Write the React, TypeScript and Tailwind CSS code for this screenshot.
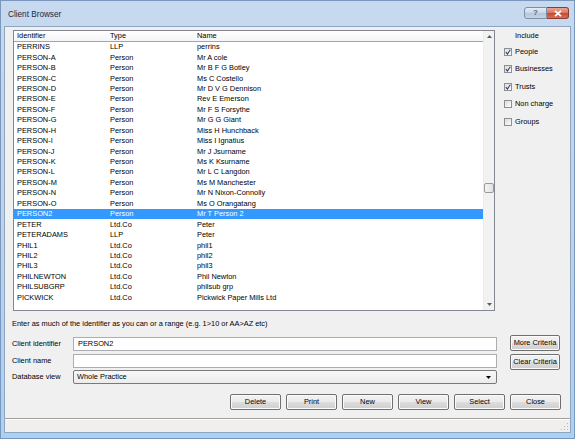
import React from 'react';

const rows: [string, string, string][] = [
  ['PERRINS', 'LLP', 'perrins'],
  ['PERSON-A', 'Person', 'Mr A cole'],
  ['PERSON-B', 'Person', 'Mr B F G Botley'],
  ['PERSON-C', 'Person', 'Ms C Costello'],
  ['PERSON-D', 'Person', 'Mr D V G Dennison'],
  ['PERSON-E', 'Person', 'Rev E Emerson'],
  ['PERSON-F', 'Person', 'Mr F S Forsythe'],
  ['PERSON-G', 'Person', 'Mr G G Giant'],
  ['PERSON-H', 'Person', 'Miss H Hunchback'],
  ['PERSON-I', 'Person', 'Miss I Ignatius'],
  ['PERSON-J', 'Person', 'Mr J Jsurname'],
  ['PERSON-K', 'Person', 'Ms K Ksurname'],
  ['PERSON-L', 'Person', 'Mr L C Langdon'],
  ['PERSON-M', 'Person', 'Ms M Manchester'],
  ['PERSON-N', 'Person', 'Mr N Nixon-Connolly'],
  ['PERSON-O', 'Person', 'Ms O Orangatang'],
  ['PERSON2', 'Person', 'Mr T Person 2'],
  ['PETER', 'Ltd.Co', 'Peter'],
  ['PETERADAMS', 'LLP', 'Peter'],
  ['PHIL1', 'Ltd.Co', 'phil1'],
  ['PHIL2', 'Ltd.Co', 'phil2'],
  ['PHIL3', 'Ltd.Co', 'phil3'],
  ['PHILNEWTON', 'Ltd.Co', 'Phil Newton'],
  ['PHILSUBGRP', 'Ltd.Co', 'philsub grp'],
  ['PICKWICK', 'Ltd.Co', 'Pickwick Paper Mills Ltd'],
];

const includes: [string, boolean][] = [
  ['People', true],
  ['Businesses', true],
  ['Trusts', true],
  ['Non charge', false],
  ['Groups', false],
];

function Button({ label, className = '' }: { label: string; className?: string }) {
  return (
    <div
      className={`flex h-[16px] items-center justify-center rounded-[2px] border border-[#707070] bg-[linear-gradient(#f2f2f2,#ebebeb_50%,#dddddd_50%,#cfcfcf)] shadow-[inset_0_0_0_1px_#fbfbfb] ${className}`}
    >
      {label}
    </div>
  );
}

function Checkbox({ checked }: { checked: boolean }) {
  return (
    <div className="flex h-[8px] w-[8px] items-center justify-center border border-[#8e8f8f] bg-[linear-gradient(135deg,#dcdcdc,#fbfbfb)]">
      {checked && (
        <svg width="6" height="6" viewBox="0 0 6 6">
          <path d="M0.8 3.2 L2.4 5 L5.3 0.8" fill="none" stroke="#2c3f74" strokeWidth="1.1" />
        </svg>
      )}
    </div>
  );
}

export default function App() {
  return (
    <div
      className="flex h-[439px] w-[575px] flex-col border border-[#7b97bd] bg-[linear-gradient(#c6d9ef,#bad2ec_60%,#a8d2f4)] text-[7.4px] leading-[10px] text-black"
      style={{ fontFamily: '"Liberation Sans", Arial, sans-serif' }}
    >
      {/* Title bar */}
      <div className="flex h-[25px] items-start">
        <div className="ml-[7px] mt-[8px] text-[8.2px] leading-[11px] text-[#1a2a3f]">Client Browser</div>
        <div className="ml-auto mr-[5px] mt-[6px] flex">
          <div className="flex h-[12px] w-[23px] items-center justify-center rounded-l-[3px] border border-[#7d8ea6] bg-[linear-gradient(#e4ecf6,#c9d6e6_50%,#b5c6db_50%,#c4d3e5)] text-[8px] font-bold leading-none text-[#57677c]">
            ?
          </div>
          <div className="flex h-[12px] w-[22px] items-center justify-center rounded-r-[3px] border border-l-0 border-[#8c3b33] bg-[linear-gradient(#eaa594,#d9735e_50%,#c74533_50%,#d86f57)]">
            <svg width="8" height="7" viewBox="0 0 8 7">
              <path d="M1 0.8 L7 6.2 M7 0.8 L1 6.2" stroke="#ffffff" strokeWidth="1.8" />
            </svg>
          </div>
        </div>
      </div>

      {/* Client area */}
      <div className="mx-[3px] flex h-[407px] flex-col border border-[#8fa6c3] bg-[#f0f0f0]">
        <div className="mt-[3px] flex">
          {/* List box */}
          <div className="ml-[8px] flex h-[281px] w-[482px] border border-[#828790] bg-white">
            <div className="flex w-[469px] flex-col">
              <div className="grid h-[11px] grid-cols-[93px_87px_1fr] items-center border-b border-[#a5a5a5] bg-[linear-gradient(#ffffff,#f4f5f7)]">
                <div className="pl-[3px]">Identifier</div>
                <div className="pl-[3px]">Type</div>
                <div className="pl-[3px]">Name</div>
              </div>
              {rows.map(([id, type, name]) => {
                const selected = id === 'PERSON2';
                return (
                  <div
                    key={id}
                    className={`grid h-[10.45px] grid-cols-[93px_87px_1fr] items-center ${
                      selected ? 'bg-[#3399ff] text-white' : ''
                    }`}
                  >
                    <div className="pl-[3px]">{id}</div>
                    <div className="pl-[3px]">{type}</div>
                    <div className="pl-[3px]">{name}</div>
                  </div>
                );
              })}
            </div>
            {/* Scrollbar */}
            <div className="flex w-[11px] flex-col bg-[#f2f2f2] border-l border-[#ececec]">
              <div className="flex h-[11px] items-center justify-center">
                <svg width="5" height="3" viewBox="0 0 5 3">
                  <path d="M0 3 L2.5 0 L5 3 Z" fill="#5c5c5c" />
                </svg>
              </div>
              <div className="mt-[141px] h-[10px] rounded-[2px] border border-[#9a9a9a] bg-[linear-gradient(90deg,#f4f4f4,#e2e2e2)]" />
              <div className="mt-auto flex h-[11px] items-center justify-center">
                <svg width="5" height="3" viewBox="0 0 5 3">
                  <path d="M0 0 L2.5 3 L5 0 Z" fill="#5c5c5c" />
                </svg>
              </div>
            </div>
          </div>

          {/* Include panel */}
          <div className="ml-[9px] flex flex-col">
            <div className="ml-[11px] mt-[1px] h-[10px]">Include</div>
            <div className="mt-[2px] flex flex-col">
              {includes.map(([label, checked]) => (
                <div key={label} className="flex h-[17.5px] items-center gap-[3px]">
                  <Checkbox checked={checked} />
                  <span>{label}</span>
                </div>
              ))}
            </div>
          </div>
        </div>

        <div className="ml-[7px] mt-[8px] h-[10px]">
          Enter as much of the identifier as you can or a range (e.g. 1&gt;10 or AA&gt;AZ etc)
        </div>

        {/* Criteria */}
        <div className="mt-[6px] flex items-start">
          <div className="ml-[7px] mt-[2px] flex flex-col gap-[2.5px]">
            <div className="flex h-[14px] items-center">
              <div className="w-[61px]">Client identifier</div>
              <div className="flex h-[14px] w-[424px] items-center border border-[#abadb3] bg-white pl-[4px]">
                PERSON2
              </div>
            </div>
            <div className="flex h-[14px] items-center">
              <div className="w-[61px]">Client name</div>
              <div className="h-[14px] w-[424px] border border-[#abadb3] bg-white" />
            </div>
            <div className="flex h-[14px] items-center">
              <div className="w-[61px]">Database view</div>
              <div className="flex h-[14px] w-[424px] items-center rounded-[2px] border border-[#7a7a7a] bg-[linear-gradient(#f7f7f7,#ececec)] pl-[3px]">
                <span>Whole Practice</span>
                <svg className="ml-auto mr-[5px]" width="5" height="3" viewBox="0 0 5 3">
                  <path d="M0 0 L2.5 3 L5 0 Z" fill="#000000" />
                </svg>
              </div>
            </div>
          </div>
          <div className="ml-[13px] flex flex-col gap-[3px]">
            <Button label="More Criteria" className="w-[50px]" />
            <Button label="Clear Criteria" className="w-[50px]" />
          </div>
        </div>

        {/* Action buttons */}
        <div className="mt-[10px] flex justify-end gap-[5px] pr-[9px]">
          {['Delete', 'Print', 'New', 'View', 'Select', 'Close'].map((b) => (
            <Button key={b} label={b} className="w-[51px]" />
          ))}
        </div>

        {/* Status bar */}
        <div className="mt-[8px] flex flex-1 items-end justify-end border-t border-[#a0a0a0] bg-[#f1efee] shadow-[inset_0_1px_0_#ffffff]">
          <svg className="mb-[1px] mr-[1px]" width="8" height="8" viewBox="0 0 8 8">
            <rect x="6" y="0" width="1" height="1" fill="#b8b8b8" />
            <rect x="3" y="3" width="1" height="1" fill="#b8b8b8" />
            <rect x="6" y="3" width="1" height="1" fill="#b8b8b8" />
            <rect x="0" y="6" width="1" height="1" fill="#b8b8b8" />
            <rect x="3" y="6" width="1" height="1" fill="#b8b8b8" />
            <rect x="6" y="6" width="1" height="1" fill="#b8b8b8" />
          </svg>
        </div>
      </div>
    </div>
  );
}
